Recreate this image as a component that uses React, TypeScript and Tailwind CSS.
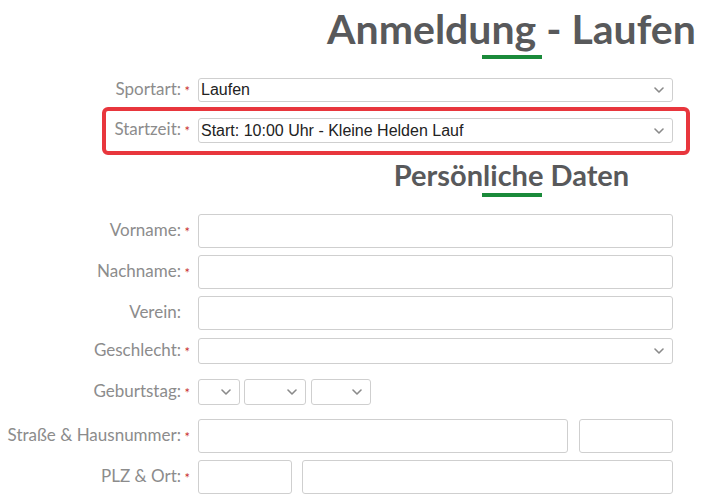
import React from "react";

const labelFont = { fontFamily: "Lato, 'Noto Sans', sans-serif" };

function Chevron() {
  return (
    <svg
      className="pointer-events-none absolute right-[8px] top-1/2 h-[6px] w-[10px] -translate-y-1/2"
      viewBox="0 0 10 6"
      fill="none"
    >
      <path d="M1 1l4 4 4-4" stroke="#8a8a8a" strokeWidth="1.6" strokeLinecap="round" strokeLinejoin="round" />
    </svg>
  );
}

function Select({ value, className }: { value?: string; className: string }) {
  return (
    <div className={`relative box-border rounded-[3px] border border-[#cfcfcf] bg-white ${className}`}>
      <div
        className="flex h-full items-center pl-[2px] text-[16px] text-[#222]"
        style={{ fontFamily: "'Liberation Sans', Arial, sans-serif" }}
      >
        {value}
      </div>
      <Chevron />
    </div>
  );
}

function Input({ className }: { className: string }) {
  return <div className={`box-border h-[34px] rounded-[3px] border border-[#cfcfcf] bg-white ${className}`} />;
}

function Label({ text, required = true, width = "w-[198px]" }: { text: string; required?: boolean; width?: string }) {
  return (
    <div className={`flex shrink-0 items-center justify-end pr-[8px] ${width}`} style={labelFont}>
      <span className="-translate-y-[2px] whitespace-nowrap text-[17px] leading-none text-[#8c8c8c]">{text}</span>
      <span className="w-[9px] translate-y-[1px] text-right text-[13px] leading-none text-[#c9302c]">
        {required ? "*" : ""}
      </span>
    </div>
  );
}

function Heading({ text, size }: { text: string; size: string }) {
  return (
    <div className="ml-[315px] flex w-[393px] flex-col items-center">
      <h1
        className={`whitespace-nowrap font-bold leading-none text-[#58595b] ${size}`}
        style={{ fontFamily: "Lato, 'Noto Sans', sans-serif" }}
      >
        {text}
      </h1>
    </div>
  );
}

function Underline({ className }: { className: string }) {
  return (
    <div className={`ml-[315px] flex w-[393px] justify-center ${className}`}>
      <div className="h-[4px] w-[60px] bg-[#1a8a3a]" />
    </div>
  );
}

export default function App() {
  return (
    <main className="h-[502px] w-[708px] overflow-hidden bg-white">
      <div className="pt-[8px]">
        <Heading text="Anmeldung - Laufen" size="text-[41px]" />
      </div>
      <Underline className="mt-[6px]" />

      <div className="mt-[19px] flex h-[24px] items-center">
        <Label text="Sportart:" />
        <Select value="Laufen" className="h-[24px] w-[475px]" />
      </div>

      <div className="ml-[102px] mt-[5px] box-border flex h-[48px] w-[588px] items-center rounded-[6px] border-4 border-[#e8363d] pb-[1px]">
        <Label text="Startzeit:" width="w-[92px]" />
        <Select value="Start: 10:00 Uhr - Kleine Helden Lauf" className="h-[25px] w-[475px]" />
      </div>

      <div className="mt-[5px]">
        <Heading text="Persönliche Daten" size="text-[29px]" />
      </div>
      <Underline className="mt-[4px]" />

      <div className="mt-[17px] flex flex-col">
        <div className="flex items-center">
          <Label text="Vorname:" />
          <Input className="w-[475px]" />
        </div>
        <div className="mt-[7px] flex items-center">
          <Label text="Nachname:" />
          <Input className="w-[475px]" />
        </div>
        <div className="mt-[7px] flex items-center">
          <Label text="Verein:" required={false} />
          <Input className="w-[475px]" />
        </div>
        <div className="mt-[8px] flex items-center">
          <Label text="Geschlecht:" />
          <Select className="h-[26px] w-[475px]" />
        </div>
        <div className="mt-[15px] flex items-center">
          <Label text="Geburtstag:" />
          <div className="flex">
            <Select className="h-[26px] w-[42px]" />
            <Select className="ml-[4px] h-[26px] w-[62px]" />
            <Select className="ml-[5px] h-[26px] w-[60px]" />
          </div>
        </div>
        <div className="mt-[14px] flex items-center">
          <Label text="Straße & Hausnummer:" />
          <div className="flex gap-[11px]">
            <Input className="w-[370px]" />
            <Input className="w-[94px]" />
          </div>
        </div>
        <div className="mt-[7px] flex items-center">
          <Label text="PLZ & Ort:" />
          <div className="flex gap-[10px]">
            <Input className="w-[94px]" />
            <Input className="w-[371px]" />
          </div>
        </div>
      </div>
    </main>
  );
}
